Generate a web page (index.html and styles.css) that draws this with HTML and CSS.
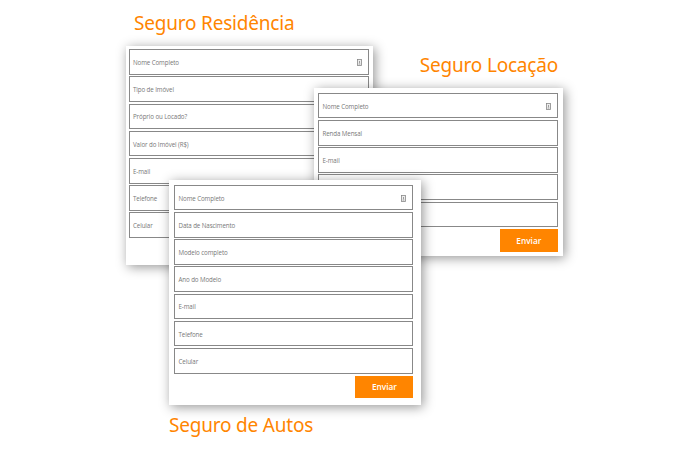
FILE: index.html
```html
<!DOCTYPE html>
<html lang="pt-BR">
<head>
<meta charset="utf-8">
<title>Seguros</title>
<link rel="stylesheet" href="styles.css">
</head>
<body>
<main class="canvas">
  <section class="quote residencia">
    <h2 class="title">Seguro Residência</h2>
    <form class="card">
      <div class="field">Nome Completo<svg class="autofill" viewBox="0 0 5 7"><rect x=".5" y=".5" width="4" height="6"/><path d="M2.5 2v2.2M1.7 5h1.6"/></svg></div>
      <div class="field">Tipo de Imóvel</div>
      <div class="field">Próprio ou Locado?</div>
      <div class="field">Valor do Imóvel (R$)</div>
      <div class="field">E-mail</div>
      <div class="field">Telefone</div>
      <div class="field">Celular</div>
    </form>
  </section>
  <section class="quote locacao">
    <h2 class="title">Seguro Locação</h2>
    <form class="card">
      <div class="field">Nome Completo<svg class="autofill" viewBox="0 0 5 7"><rect x=".5" y=".5" width="4" height="6"/><path d="M2.5 2v2.2M1.7 5h1.6"/></svg></div>
      <div class="field">Renda Mensal</div>
      <div class="field">E-mail</div>
      <div class="field"></div>
      <div class="field"></div>
      <button class="send" type="button">Enviar</button>
    </form>
  </section>
  <section class="quote autos">
    <form class="card">
      <div class="field">Nome Completo<svg class="autofill" viewBox="0 0 5 7"><rect x=".5" y=".5" width="4" height="6"/><path d="M2.5 2v2.2M1.7 5h1.6"/></svg></div>
      <div class="field">Data de Nascimento</div>
      <div class="field">Modelo completo</div>
      <div class="field">Ano do Modelo</div>
      <div class="field">E-mail</div>
      <div class="field">Telefone</div>
      <div class="field">Celular</div>
      <button class="send" type="button">Enviar</button>
    </form>
    <h2 class="title">Seguro de Autos</h2>
  </section>
</main>
</body>
</html>
```
FILE: styles.css
```css
* { box-sizing: border-box; }
body {
  margin: 0;
  background: #fff;
  font-family: "Open Sans", "Noto Sans", sans-serif;
}
.canvas {
  position: relative;
  width: 700px;
  height: 450px;
  overflow: hidden;
}
.quote {
  position: absolute;
  display: flex;
  flex-direction: column;
}
.residencia { left: 126px; top: 8px; width: 247px; }
.locacao { left: 314px; top: 50px; width: 249px; }
.autos { left: 169px; top: 180px; width: 252px; }

.title {
  margin: 0;
  height: 30px;
  font-family: "Noto Sans", "Open Sans", sans-serif;
  font-size: 19px;
  line-height: 30px;
  font-weight: 400;
  letter-spacing: -0.2px;
  white-space: nowrap;
  color: #ff8500;
}
.residencia .title { margin: 0 0 8px 8px; }
.locacao .title { margin: 0 5px 8px 0; align-self: flex-end; }
.autos .title { margin-top: 5px; }

.card {
  display: flex;
  flex-direction: column;
  gap: 1.6px;
  background: #fff;
  box-shadow: 2px 2px 11px rgba(0, 0, 0, 0.42);
}
.residencia .card { height: 219.4px; padding: 3.2px 4.5px 0 2.5px; }
.locacao .card { height: 168px; padding: 4.8px 5.2px 0 4px; }
.autos .card { height: 225px; padding: 4.8px 7.6px 0 5px; }

.field {
  display: flex;
  align-items: center;
  justify-content: space-between;
  height: 25.6px;
  flex: none;
  padding: 1px 6px 0 3.5px;
  border: 1px solid #888;
  font-size: 6.2px;
  letter-spacing: -0.1px;
  color: #777;
}
.autofill {
  width: 5px;
  height: 7px;
  fill: #eee;
  stroke: #888;
  stroke-width: 0.8;
}
.send {
  align-self: flex-end;
  width: 58px;
  height: 22.5px;
  margin-top: 0.4px;
  padding: 0;
  border: 0;
  background: #ff8500;
  color: #fff;
  font-family: inherit;
  font-size: 8.3px;
  font-weight: 600;
}
```
